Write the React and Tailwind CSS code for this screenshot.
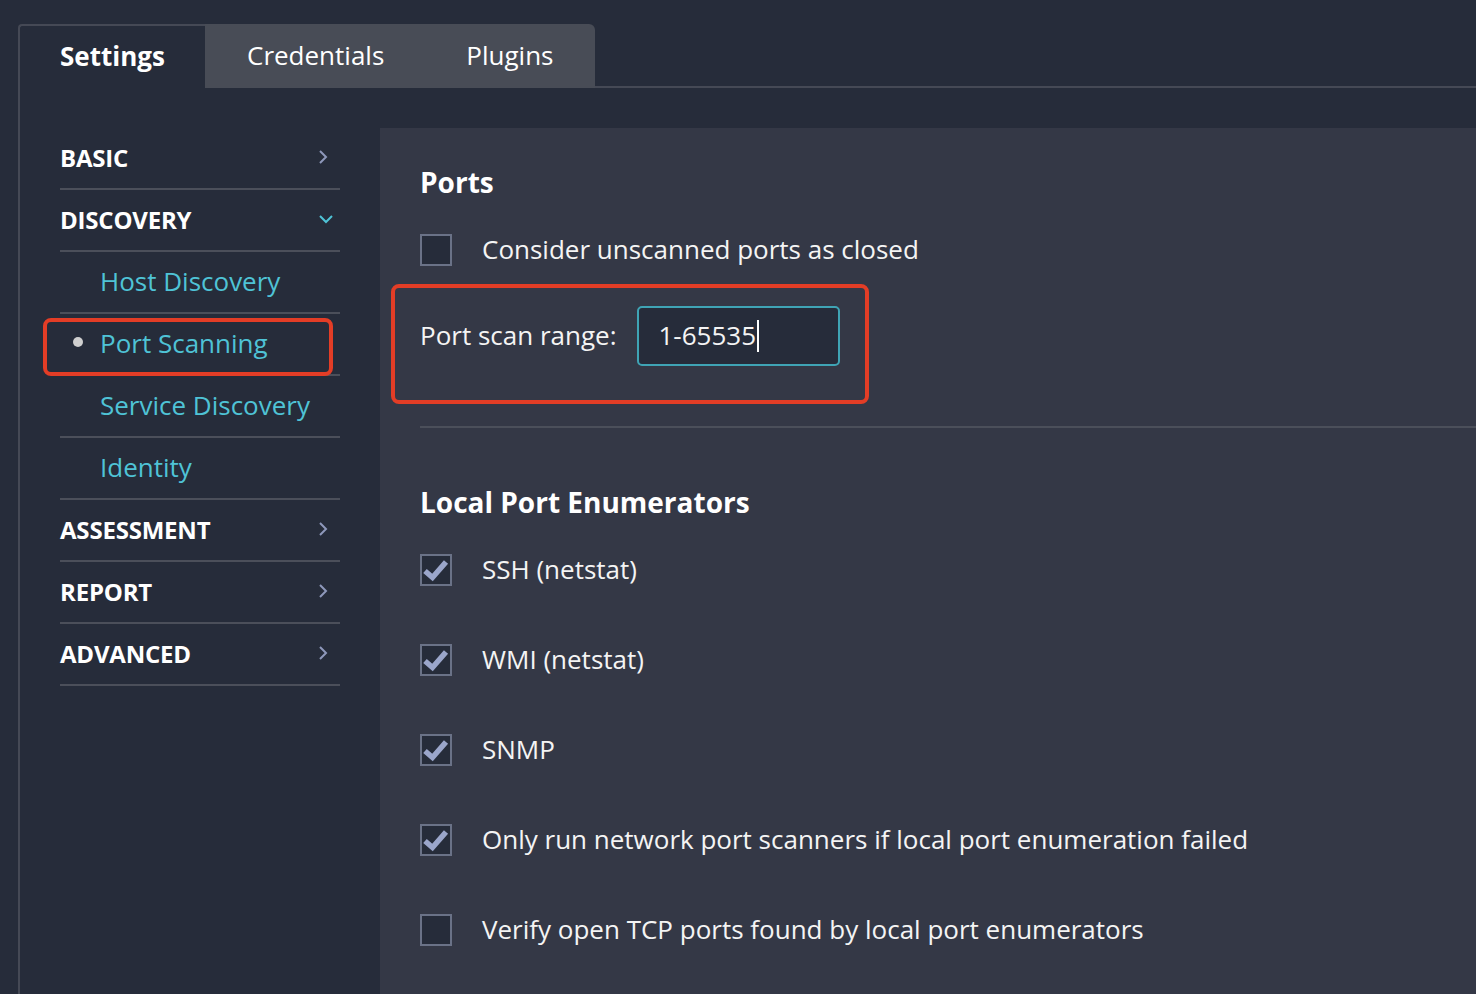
import React from "react";

const ChevronRight = () => (
  <svg width="10" height="16" viewBox="0 0 10 16" className="text-[#8e98bb]">
    <polyline points="2,2 8,8 2,14" fill="none" stroke="currentColor" strokeWidth="2" />
  </svg>
);

const ChevronDown = () => (
  <svg width="16" height="10" viewBox="0 0 16 10" className="text-[#4fc3d6]">
    <polyline points="2,2 8,8 14,2" fill="none" stroke="currentColor" strokeWidth="2" />
  </svg>
);

const Checkbox = ({ checked }) => (
  <div className="w-[32px] h-[32px] shrink-0 border-2 border-[#6a7287] bg-[#262c3a] flex items-center justify-center">
    {checked && (
      <svg width="28" height="28" viewBox="0 0 28 28">
        <polyline points="3,15 10.5,21.5 24,6" fill="none" stroke="#9ba6cb" strokeWidth="5.5" />
      </svg>
    )}
  </div>
);

const CheckRow = ({ checked, label, className = "" }) => (
  <div className={`flex items-center h-[40px] gap-[30px] ${className}`}>
    <Checkbox checked={checked} />
    <span className="text-[26px] text-[#f4f4f4] mt-[-1px]">{label}</span>
  </div>
);

const sideItems = [
  { label: "BASIC", type: "head", icon: "right" },
  { label: "DISCOVERY", type: "head", icon: "down" },
  { label: "Host Discovery", type: "sub" },
  { label: "Port Scanning", type: "sub", active: true },
  { label: "Service Discovery", type: "sub" },
  { label: "Identity", type: "sub" },
  { label: "ASSESSMENT", type: "head", icon: "right" },
  { label: "REPORT", type: "head", icon: "right" },
  { label: "ADVANCED", type: "head", icon: "right" },
];

export default function App() {
  return (
    <div
      className="h-screen bg-[#262c3a] overflow-hidden flex flex-col pt-[24px] pl-[18px] text-white"
      style={{ fontFamily: '"Open Sans", "Noto Sans", sans-serif' }}
    >
      {/* Tabs */}
      <div className="flex h-[64px] shrink-0">
        <div className="flex border-t-2 border-l-2 border-[#454955] rounded-tl-[4px]">
          <div className="w-[185px] flex items-center justify-center text-[26px] font-bold pb-[2px]">
            Settings
          </div>
        </div>
        <div className="flex bg-[#484c56] rounded-tr-[6px]">
          <div className="px-[42px] flex items-center text-[26px] pb-[2px]">Credentials</div>
          <div className="pl-[40px] pr-[42px] flex items-center text-[26px] pb-[2px]">Plugins</div>
        </div>
        <div className="flex-1 border-b-2 border-[#454955]" />
      </div>

      {/* Body */}
      <div className="flex flex-1 border-l-2 border-[#454955] pt-[40px]">
        {/* Sidebar */}
        <div className="w-[360px] shrink-0 px-[40px]">
          {sideItems.map((item) => (
            <div
              key={item.label}
              className="relative h-[62px] flex items-center justify-between border-b-2 border-[#4b4f5a]"
            >
              {item.type === "head" ? (
                <span className="text-[24px] font-bold tracking-[-0.2px] mt-[-1px]">{item.label}</span>
              ) : (
                <span className="pl-[40px] text-[26px] text-[#4fc3d6] mt-[-2px]">{item.label}</span>
              )}
              {item.icon === "right" && (
                <span className="mr-[12px] mt-[-2px]">
                  <ChevronRight />
                </span>
              )}
              {item.icon === "down" && (
                <span className="mr-[6px] mt-[-2px]">
                  <ChevronDown />
                </span>
              )}
              {item.active && (
                <>
                  <span className="absolute left-[13px] top-[23px] w-[10px] h-[10px] rounded-full bg-[#cfcfcf]" />
                  <span className="absolute left-[-17px] top-[4px] w-[290px] h-[58px] border-4 border-[#e33d26] rounded-[8px]" />
                </>
              )}
            </div>
          ))}
        </div>

        {/* Main panel */}
        <div className="flex-1 bg-[#343846] pl-[40px] pt-[38px]">
          <h2 className="h-[32px] flex items-center text-[28px] font-bold">Ports</h2>
          <CheckRow className="mt-[32px]" label="Consider unscanned ports as closed" />

          <div className="relative mt-[36px] h-[60px] flex items-center gap-[20px]">
            <span className="text-[26px] text-[#f4f4f4] mt-[-2px]">Port scan range:</span>
            <div className="w-[203px] h-[60px] border-2 border-[#3fa4b5] rounded-[5px] bg-[#262c3a] flex items-center pl-[20px]">
              <span className="text-[26px] text-[#f4f4f4] mt-[-2px]">1-65535</span>
              <span className="w-[2px] h-[32px] bg-white ml-[1px]" />
            </div>
            <span className="absolute left-[-29px] top-[-22px] w-[478px] h-[120px] border-4 border-[#e33d26] rounded-[8px]" />
          </div>

          <div className="mt-[60px] border-t-2 border-[#4b4f5a]" />

          <h2 className="mt-[58px] h-[32px] flex items-center text-[28px] font-bold">
            Local Port Enumerators
          </h2>
          <CheckRow className="mt-[32px]" checked label="SSH (netstat)" />
          <CheckRow className="mt-[50px]" checked label="WMI (netstat)" />
          <CheckRow className="mt-[50px]" checked label="SNMP" />
          <CheckRow
            className="mt-[50px]"
            checked
            label="Only run network port scanners if local port enumeration failed"
          />
          <CheckRow className="mt-[50px]" label="Verify open TCP ports found by local port enumerators" />
        </div>
      </div>
    </div>
  );
}
